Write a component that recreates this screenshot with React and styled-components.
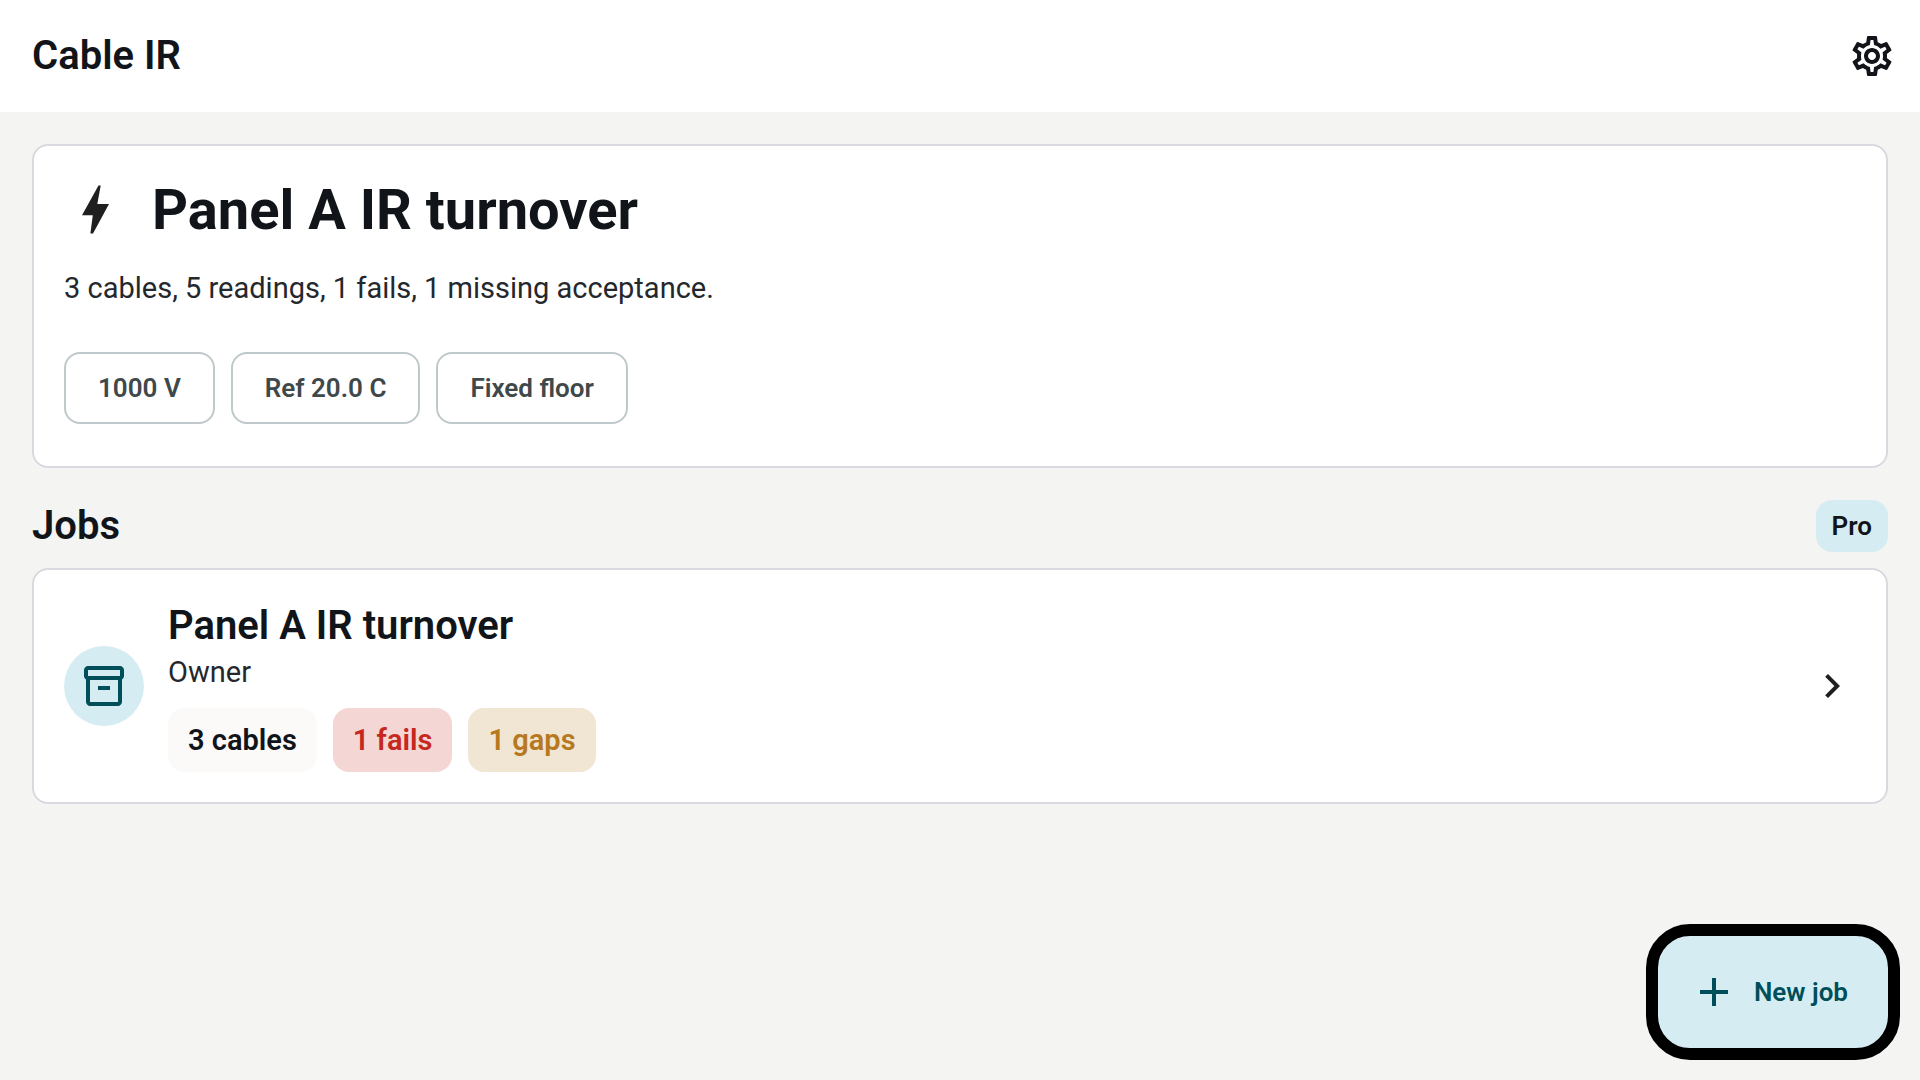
import React from "react";
import styled, { createGlobalStyle, ThemeProvider } from "styled-components";
import {
  MdAdd,
  MdChevronRight,
  MdOutlineInventory2,
  MdOutlineSettings,
} from "react-icons/md";

const theme = {
  colors: {
    page: "#f4f4f2",
    surface: "#ffffff",
    outline: "#d8dadf",
    ink: "#11151a",
    body: "#24282d",
    icon: "#1f1f1f",
    chipOutline: "#bfc8ca",
    chipText: "#3f484a",
    aqua: "#d5edf2",
    teal: "#004e59",
    red: "#c62820",
    redTint: "#f4d6d4",
    amber: "#b7791f",
    amberTint: "#f1e5d4",
    neutralTint: "#fbfaf8",
  },
};

const GlobalStyle = createGlobalStyle`
  * {
    box-sizing: border-box;
  }
  body {
    margin: 0;
    background: ${theme.colors.page};
    color: ${theme.colors.ink};
    font-family: Roboto, sans-serif;
    font-size: 29px;
    line-height: 40px;
  }
`;

const TopBar = styled.header`
  display: flex;
  align-items: center;
  justify-content: space-between;
  height: 112px;
  padding: 0 24px 0 32px;
  background: ${({ theme: { colors } }) => colors.surface};
`;

const AppTitle = styled.h1`
  margin: 0;
  font-size: 40px;
  line-height: 48px;
  font-weight: 600;
`;

const IconButton = styled.button`
  display: flex;
  padding: 0;
  border: 0;
  background: none;
  color: inherit;
  font-size: 48px;
  cursor: pointer;
`;

const Content = styled.main`
  padding: 32px 32px 160px;
`;

const Card = styled.section`
  padding: 30px;
  background: ${({ theme: { colors } }) => colors.surface};
  border: 2px solid ${({ theme: { colors } }) => colors.outline};
  border-radius: 16px;
`;

const Hero = styled.div`
  display: flex;
  align-items: center;
  gap: 24px;
`;

const HeroTitle = styled.h2`
  margin: 0;
  font-size: 56px;
  line-height: 68px;
  font-weight: 700;
`;

const BoltIcon = styled.svg`
  width: 64px;
  height: 64px;
  fill: ${({ theme: { colors } }) => colors.icon};
`;

const Summary = styled.p`
  margin: 24px 0 44px;
  color: ${({ theme: { colors } }) => colors.body};
`;

const Row = styled.div`
  display: flex;
  flex-wrap: wrap;
  gap: 16px;
`;

const Chip = styled.span`
  padding: 14px 32px;
  margin-bottom: 12px;
  border: 2px solid ${({ theme: { colors } }) => colors.chipOutline};
  border-radius: 16px;
  color: ${({ theme: { colors } }) => colors.chipText};
  font-size: 26px;
  font-weight: 600;
`;

const SectionHead = styled.div`
  display: flex;
  align-items: center;
  justify-content: space-between;
  margin: 32px 0 16px;
`;

const SectionTitle = styled.h2`
  margin: 0;
  font-size: 40px;
  line-height: 48px;
  font-weight: 600;
`;

const Badge = styled.span`
  padding: 6px 16px;
  border-radius: 16px;
  background: ${({ theme: { colors } }) => colors.aqua};
  font-size: 26px;
  font-weight: 600;
`;

const JobCard = styled(Card).attrs({ as: "a" })`
  display: flex;
  align-items: center;
  gap: 24px;
  color: inherit;
  text-decoration: none;

  > svg {
    flex: none;
    color: ${({ theme: { colors } }) => colors.icon};
    font-size: 48px;
  }
`;

const Avatar = styled.span`
  display: flex;
  flex: none;
  align-items: center;
  justify-content: center;
  width: 80px;
  height: 80px;
  border-radius: 50%;
  background: ${({ theme: { colors } }) => colors.aqua};
  color: ${({ theme: { colors } }) => colors.teal};
  font-size: 48px;
`;

const JobInfo = styled.div`
  flex: 1;
`;

const JobTitle = styled.h3`
  margin: 0;
  font-size: 40px;
  line-height: 52px;
  font-weight: 600;
`;

const Owner = styled.p`
  margin: 0 0 16px;
  color: ${({ theme: { colors } }) => colors.body};
`;

const Tag = styled.span`
  padding: 12px 20px;
  border-radius: 16px;
  background: ${({ tone, theme: { colors } }) =>
    tone === "red" ? colors.redTint :
      tone === "amber" ? colors.amberTint : colors.neutralTint};
  color: ${({ tone, theme: { colors } }) => colors[tone] || colors.ink};
  font-weight: 600;
`;

const NewJobButton = styled.button`
  position: fixed;
  right: 20px;
  bottom: 20px;
  display: flex;
  align-items: center;
  gap: 16px;
  height: 136px;
  padding: 0 40px 0 32px;
  border: 12px solid #000;
  border-radius: 44px;
  background: ${({ theme: { colors } }) => colors.aqua};
  color: ${({ theme: { colors } }) => colors.teal};
  font-family: inherit;
  font-size: 26px;
  font-weight: 600;
  cursor: pointer;

  svg {
    font-size: 48px;
  }
`;

const settings = ["1000 V", "Ref 20.0 C", "Fixed floor"];

const jobs = [
  {
    name: "Panel A IR turnover",
    role: "Owner",
    tags: [
      { text: "3 cables" },
      { text: "1 fails", tone: "red" },
      { text: "1 gaps", tone: "amber" },
    ],
  },
];

const Job = ({ name, role, tags }) => (
  <JobCard href="#job">
    <Avatar>
      <MdOutlineInventory2 />
    </Avatar>
    <JobInfo>
      <JobTitle>{name}</JobTitle>
      <Owner>{role}</Owner>
      <Row>
        {tags.map(({ text, tone }) => (
          <Tag key={text} tone={tone}>{text}</Tag>
        ))}
      </Row>
    </JobInfo>
    <MdChevronRight />
  </JobCard>
);

const App = () => (
  <ThemeProvider theme={theme}>
    <GlobalStyle />
    <TopBar>
      <AppTitle>Cable IR</AppTitle>
      <IconButton aria-label="Settings">
        <MdOutlineSettings />
      </IconButton>
    </TopBar>
    <Content>
      <Card>
        <Hero>
          <BoltIcon viewBox="0 0 64 64" aria-hidden="true">
            <path d="M34.5 7.5h2.2L33.3 26H45L29 55.5h-2.6l2.4-18.3H18z" />
          </BoltIcon>
          <HeroTitle>Panel A IR turnover</HeroTitle>
        </Hero>
        <Summary>3 cables, 5 readings, 1 fails, 1 missing acceptance.</Summary>
        <Row>
          {settings.map((s) => (
            <Chip key={s}>{s}</Chip>
          ))}
        </Row>
      </Card>
      <SectionHead>
        <SectionTitle>Jobs</SectionTitle>
        <Badge>Pro</Badge>
      </SectionHead>
      {jobs.map((job) => (
        <Job key={job.name} {...job} />
      ))}
    </Content>
    <NewJobButton>
      <MdAdd />
      New job
    </NewJobButton>
  </ThemeProvider>
);

export default App;
